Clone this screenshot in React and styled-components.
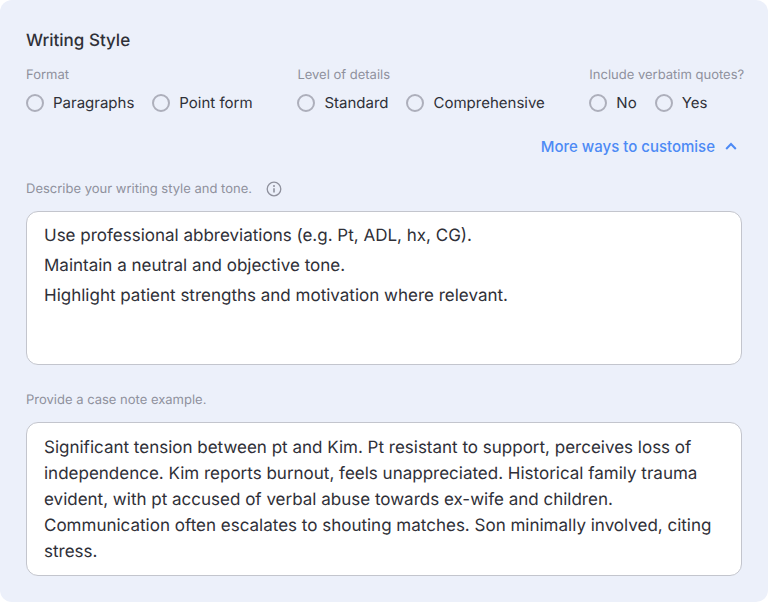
import React, { useState } from 'react'
import styled, { createGlobalStyle } from 'styled-components'

const GlobalStyle = createGlobalStyle`
* {
    box-sizing: border-box;
}

body {
    margin: 0;
    background-color: #ffffff;
    font-family: Inter, "Liberation Sans", sans-serif;
    text-rendering: geometricPrecision;
}
`

const Card = styled.form`
display: flex;
flex-direction: column;
padding: 29px 26px 26px;
border-radius: 12px;
background-color: #ecf0fa;
color: #2f3038;
`

const Title = styled.h2`
margin: 0 0 12px;
font-size: 17px;
font-weight: 500;
line-height: 24px;
`

const Options = styled.div`
display: flex;
gap: 48px;
white-space: nowrap;
`

const Group = styled.fieldset`
margin: 0;
padding: 0;
border: none;
min-width: 0;
`

const Legend = styled.legend`
padding: 0;
margin-bottom: 8px;
font-size: 13px;
line-height: 20px;
color: #8f919d;
`

const Choices = styled.div`
display: flex;
gap: 18px;
`

const Choice = styled.label`
display: flex;
align-items: center;
gap: 9px;
font-size: 15px;
line-height: 20px;
cursor: pointer;
`

const Radio = styled.input`
appearance: none;
width: 18px;
height: 18px;
margin: 0;
border: 2px solid #adafbb;
border-radius: 50%;
cursor: pointer;

&:checked {
    border: 5px solid #4c8bf5;
}
`

const MoreButton = styled.button`
display: flex;
align-items: center;
align-self: flex-end;
gap: 10px;
margin: 22px 0 20px;
padding: 0 5px;
border: none;
background: none;
color: #4d8af5;
font-family: inherit;
font-size: 15px;
font-weight: 500;
line-height: 24px;
cursor: pointer;
`

const FieldHeader = styled.div`
display: flex;
align-items: center;
gap: 14px;
margin-bottom: 12px;
color: #8f919d;
`

const FieldLabel = styled.label`
font-size: 13px;
line-height: 20px;
`

const InfoButton = styled.button`
display: flex;
padding: 0;
border: none;
background: none;
color: inherit;
cursor: pointer;
`

const TextArea = styled.textarea`
display: block;
width: 100%;
height: 154px;
margin-bottom: ${(props) => props.$last ? '0' : '25px'};
padding: ${(props) => props.$loose ? '9px 12px 9px 17px' : '12px 12px 9px 17px'};
border: 1px solid #c3c5cd;
border-radius: 12px;
outline: none;
resize: none;
overflow: hidden;
background-color: #ffffff;
color: #2f3038;
font-family: inherit;
font-size: 17px;
line-height: ${(props) => props.$loose ? '30px' : '26px'};
text-rendering: inherit;

&:focus {
    border-color: #4d8af5;
}
`

const groups = [
    { name: 'format', title: 'Format', choices: ['Paragraphs', 'Point form'] },
    { name: 'details', title: 'Level of details', choices: ['Standard', 'Comprehensive'] },
    { name: 'quotes', title: 'Include verbatim quotes?', choices: ['No', 'Yes'] },
]

const defaultStyle = `Use professional abbreviations (e.g. Pt, ADL, hx, CG).
Maintain a neutral and objective tone.
Highlight patient strengths and motivation where relevant.`

const defaultExample = 'Significant tension between pt and Kim. Pt resistant to support, perceives loss of independence. Kim reports burnout, feels unappreciated. Historical family trauma evident, with pt accused of verbal abuse towards ex-wife and children. Communication often escalates to shouting matches. Son minimally involved, citing stress.'

const InfoIcon = () => (
    <svg width="16" height="16" viewBox="0 0 16 16" fill="none" stroke="currentColor" aria-hidden="true">
        <circle cx="8" cy="8" r="6.8" strokeWidth="1.3" />
        <path d="M8 7.2v4.2" strokeWidth="1.6" />
        <circle cx="8" cy="5" r="1" fill="currentColor" stroke="none" />
    </svg>
)

const Chevron = ({ open }) => (
    <svg width="12" height="12" viewBox="0 0 12 12" fill="none" stroke="currentColor" strokeWidth="2" aria-hidden="true">
        <path d={open ? 'M1.2 8 6 3l4.8 5' : 'M1.2 4 6 9l4.8-5'} />
    </svg>
)

const App = () => {
    const [open, setOpen] = useState(true)
    const [style, setStyle] = useState(defaultStyle)
    const [example, setExample] = useState(defaultExample)

    return (
        <>
            <GlobalStyle />
            <Card>
                <Title>Writing Style</Title>

                <Options>
                    {groups.map((group) => (
                        <Group key={group.name}>
                            <Legend>{group.title}</Legend>
                            <Choices>
                                {group.choices.map((choice) => (
                                    <Choice key={choice}>
                                        <Radio type="radio" name={group.name} value={choice} />
                                        {choice}
                                    </Choice>
                                ))}
                            </Choices>
                        </Group>
                    ))}
                </Options>

                <MoreButton type="button" aria-expanded={open} onClick={() => setOpen(!open)}>
                    More ways to customise
                    <Chevron open={open} />
                </MoreButton>

                {open && (
                    <>
                        <FieldHeader>
                            <FieldLabel htmlFor="style">Describe your writing style and tone.</FieldLabel>
                            <InfoButton type="button" aria-label="About writing style"><InfoIcon /></InfoButton>
                        </FieldHeader>
                        <TextArea id="style" $loose spellCheck={false} value={style} onChange={(e) => setStyle(e.target.value)} />

                        <FieldHeader>
                            <FieldLabel htmlFor="example">Provide a case note example.</FieldLabel>
                        </FieldHeader>
                        <TextArea id="example" $last spellCheck={false} value={example} onChange={(e) => setExample(e.target.value)} />
                    </>
                )}
            </Card>
        </>
    )
}

export default App
